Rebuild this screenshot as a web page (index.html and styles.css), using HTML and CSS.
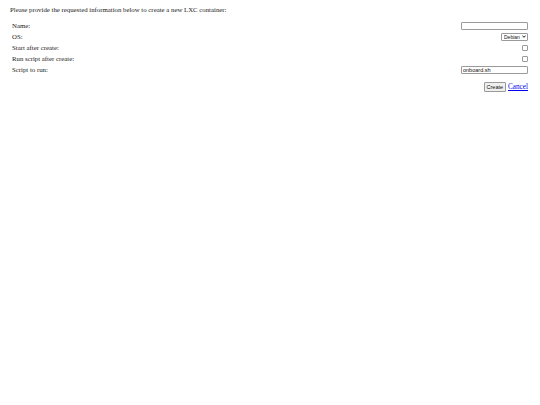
FILE: index.html
```html
<!DOCTYPE html>
<html>
<head>
<meta charset="utf-8">
<link rel="stylesheet" href="styles.css">
</head>
<body>
<p class="intro">Please provide the requested information below to create a new LXC container:</p>
<div class="form">
  <div class="row"><label class="lbl">Name:</label><input class="txt" type="text"></div>
  <div class="row"><label class="lbl">OS:</label><select class="sel"><option>Debian</option></select></div>
  <div class="row"><label class="lbl">Start after create:</label><input class="chk" type="checkbox"></div>
  <div class="row"><label class="lbl">Run script after create:</label><input class="chk" type="checkbox"></div>
  <div class="row"><label class="lbl">Script to run:</label><input class="txt" type="text" value="onboard.sh"></div>
  <div class="actions"><button class="btn">Create</button><a class="cancel" href="#">Cancel</a></div>
</div>
</body>
</html>
```

FILE: styles.css
```css
html, body { background: #fff; }
body {
  margin: 0;
  padding: 6px 12px 4px 10px;
  font-family: "Liberation Serif", "Times New Roman", serif;
  font-size: 6.8px;
  color: #1a1a1a;
}
.intro { margin: 0 0 6px 0; line-height: 8px; }
.form { display: flex; flex-direction: column; padding-left: 2px; }
.row {
  display: flex;
  justify-content: space-between;
  align-items: center;
  height: 11px;
}
.lbl { line-height: 8px; }
.txt {
  box-sizing: border-box;
  width: 67px;
  height: 8px;
  margin: 0;
  padding: 0 1px;
  border: 1px solid #9a9a9a;
  border-radius: 1px;
  font-family: "Liberation Sans", Arial, sans-serif;
  font-size: 5.5px;
  color: #111;
  background: #fff;
  outline: none;
}
.sel {
  -webkit-appearance: none;
  appearance: none;
  box-sizing: border-box;
  width: 27px;
  height: 8px;
  margin: 0;
  padding: 0 0 0 2px;
  border: 1px solid #9a9a9a;
  border-radius: 1px;
  font-family: "Liberation Sans", Arial, sans-serif;
  font-size: 5px;
  line-height: 6px;
  color: #111;
  background: #fff url("data:image/svg+xml;utf8,<svg xmlns='http://www.w3.org/2000/svg' width='4' height='3' viewBox='0 0 4 3'><path d='M0.4 0.6 L2 2.3 L3.6 0.6' fill='none' stroke='black' stroke-width='0.9'/></svg>") no-repeat right 1.5px center / 4px 3px;
}
.chk {
  -webkit-appearance: none;
  appearance: none;
  box-sizing: border-box;
  width: 6px;
  height: 6px;
  margin: 0;
  border: 1px solid #9a9a9a;
  border-radius: 1px;
  background: #fff;
}
.actions {
  display: flex;
  justify-content: flex-end;
  align-items: center;
  gap: 2px;
  margin-top: 7px;
}
.btn {
  box-sizing: border-box;
  height: 10px;
  padding: 0 2px;
  margin: 0;
  border: 1px solid #9a9a9a;
  border-radius: 1px;
  background: #efefef;
  font-family: "Liberation Sans", Arial, sans-serif;
  font-size: 5.5px;
  color: #111;
}
.cancel {
  color: #0000ee;
  text-decoration: underline;
  font-size: 7.2px;
}
```
